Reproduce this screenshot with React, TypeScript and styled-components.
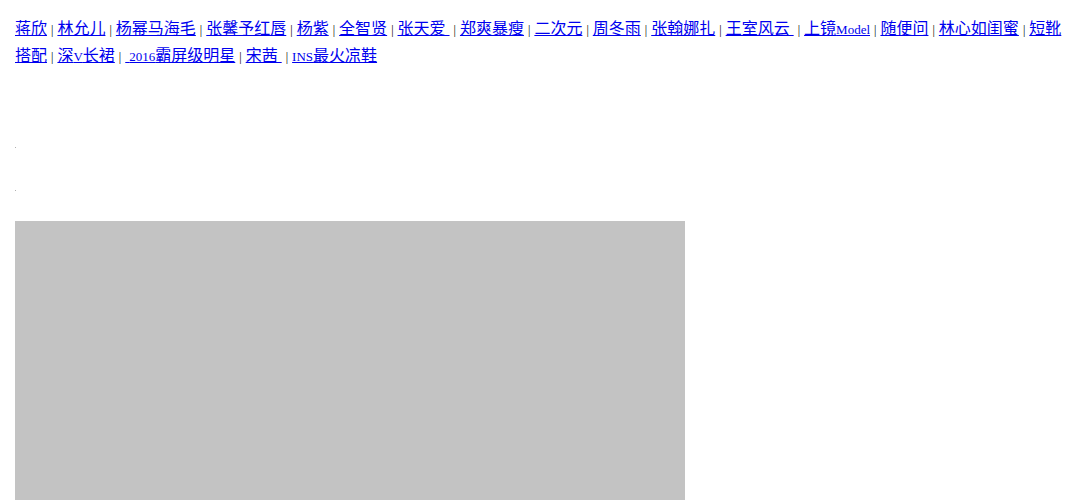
import styled, { createGlobalStyle } from "styled-components";

const GlobalStyle = createGlobalStyle`
  body {
    margin: 0;
    background: #ffffff;
    font-family: "Liberation Serif", "Noto Sans CJK SC", serif;
  }
`;

const tags = [
  "蒋欣",
  "林允儿",
  "杨幂马海毛",
  "张馨予红唇",
  "杨紫",
  "全智贤",
  "张天爱 ",
  "郑爽暴瘦",
  "二次元",
  "周冬雨",
  "张翰娜扎",
  "王室风云 ",
  "上镜Model",
  "随便问",
  "林心如闺蜜",
  "短靴搭配",
  "深V长裙",
  " 2016霸屏级明星",
  "宋茜 ",
  "INS最火凉鞋",
];

// latin bits come out smaller than the chinese in the original
const renderTag = (t: string) =>
  t.split(/([A-Za-z0-9]+)/).map((part, i) =>
    /^[A-Za-z0-9]+$/.test(part) ? <Latin key={i}>{part}</Latin> : part
  );

const App = () => {
  return (
    <>
      <GlobalStyle />
      <StyledPage>
        <TagLine>
          {tags.map((t, i) => (
            <span key={t}>
              <TagLink href="#">{renderTag(t)}</TagLink>
              {i < tags.length - 1 && (
                <>
                  {" "}
                  <Sep>|</Sep>{" "}
                </>
              )}
            </span>
          ))}
        </TagLine>
        <Dot $top={77} />
        <Dot $top={42} />
        <Banner />
      </StyledPage>
    </>
  );
};

export default App;

const StyledPage = styled.div`
  padding: 16px 8px 0 15px;
  width: 1080px;
  height: 500px;
  overflow: hidden;
  box-sizing: border-box;
`;

const TagLine = styled.p`
  margin: 0;
  font-size: 16px;
  line-height: 25px;
  white-space: pre-wrap;
`;

const TagLink = styled.a`
  color: #0000ee;
  text-decoration: underline;
`;

const Latin = styled.span`
  font-size: 13px;
`;

const Sep = styled.span`
  font-size: 12px;
  color: #000000;
`;

const Dot = styled.div<{ $top: number }>`
  width: 1px;
  height: 1px;
  background: #b0b0b0;
  margin-top: ${(p) => p.$top}px;
`;

const Banner = styled.div`
  margin-top: 30px;
  width: 670px;
  height: 300px;
  background: #c3c3c3;
`;
